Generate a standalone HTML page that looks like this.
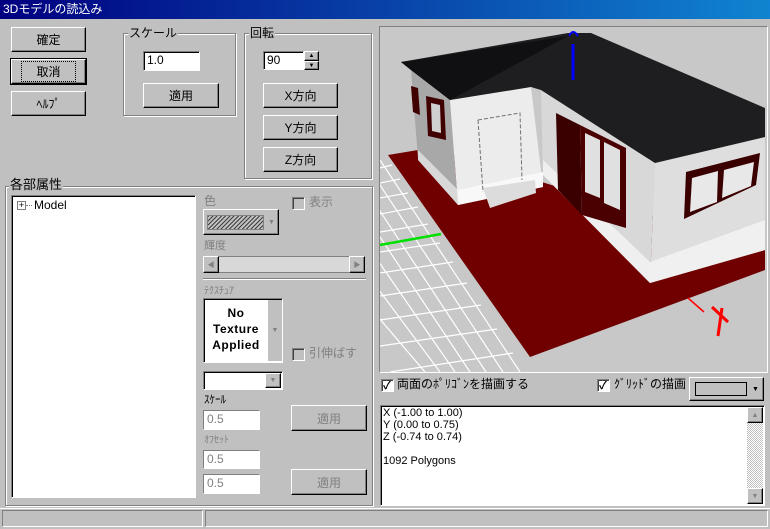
<!DOCTYPE html>
<html><head><meta charset="utf-8"><style>
*{box-sizing:border-box;margin:0;padding:0}
body{width:770px;height:529px;background:#c0c0c0;font-family:"Liberation Sans","Noto Sans CJK JP",sans-serif;font-size:12px;color:#000;position:relative;overflow:hidden}
.a{position:absolute}
.btn{position:absolute;background:#c0c0c0;border:1px solid;border-color:#fff #000 #000 #fff;box-shadow:inset -1px -1px 0 #808080;display:flex;align-items:center;justify-content:center;font-size:12px}
.grp{position:absolute;border:1px solid #808080;box-shadow:1px 1px 0 #fff,inset 1px 1px 0 #fff}
.lg{position:absolute;background:#c0c0c0;padding:0 1px;font-size:12px;line-height:13px}
.ed{position:absolute;background:#fff;border:1px solid;border-color:#808080 #fff #fff #808080;box-shadow:inset 1px 1px 0 #000;font-size:12px;line-height:16px;padding-left:3px}
.dis{color:#808080}
.cb{position:absolute;width:13px;height:13px;background:#fff;border:1px solid;border-color:#808080 #fff #fff #808080;box-shadow:inset 1px 1px 0 #404040}
.sunk{position:absolute;border:1px solid;border-color:#808080 #fff #fff #808080;box-shadow:inset 1px 1px 0 #000}
</style></head><body>
<div class="a" style="left:0;top:0;width:770px;height:19px;background:linear-gradient(90deg,#000080,#1084d0);color:#fff;font-size:12px;line-height:19px;padding-left:3px">3Dモデルの読込み</div>

<div class="btn" style="left:11px;top:27px;width:75px;height:25px">確定</div>
<div class="btn" style="left:11px;top:59px;width:75px;height:25px;outline:1px solid #000"><span style="border:1px dotted #000;padding:1px 14px">取消</span></div>
<div class="btn" style="left:11px;top:91px;width:75px;height:25px">ﾍﾙﾌﾟ</div>

<div class="grp" style="left:123px;top:33px;width:113px;height:83px"></div>
<div class="lg" style="left:128px;top:27px">スケール</div>
<div class="ed" style="left:143px;top:51px;width:57px;height:20px">1.0</div>
<div class="btn" style="left:143px;top:83px;width:76px;height:25px">適用</div>

<div class="grp" style="left:244px;top:33px;width:128px;height:146px"></div>
<div class="lg" style="left:249px;top:27px">回転</div>
<div class="ed" style="left:263px;top:51px;width:41px;height:19px">90</div>
<div class="btn" style="left:304px;top:51px;width:15px;height:10px;font-size:6px">▲</div>
<div class="btn" style="left:304px;top:61px;width:15px;height:9px;font-size:6px">▼</div>
<div class="btn" style="left:263px;top:83px;width:75px;height:25px">X方向</div>
<div class="btn" style="left:263px;top:115px;width:75px;height:25px">Y方向</div>
<div class="btn" style="left:263px;top:147px;width:75px;height:25px">Z方向</div>

<div class="grp" style="left:5px;top:186px;width:368px;height:320px"></div>
<div class="lg" style="left:9px;top:178px;font-size:13px">各部属性</div>
<div class="ed" style="left:11px;top:195px;width:185px;height:303px;padding:0">
<div class="a" style="left:5px;top:5px;width:9px;height:9px;border:1px solid #808080;font-size:9px;line-height:7px;text-align:center">+</div>
<div class="a" style="left:14px;top:9px;width:6px;border-top:1px dotted #808080"></div>
<div class="a" style="left:22px;top:2px;line-height:14px">Model</div>
</div>

<div class="lg dis" style="left:203px;top:195px">色</div>
<div class="btn" style="left:203px;top:209px;width:76px;height:26px;justify-content:flex-start;padding-left:3px">
<div style="width:57px;height:15px;border:1px solid #808080;background:repeating-linear-gradient(135deg,#404040 0 1px,#c0c0c0 1px 3px)"></div><span style="color:#808080;font-size:7px;margin-left:4px">▼</span></div>
<div class="cb" style="left:292px;top:197px;background:#c0c0c0"></div>
<div class="lg dis" style="left:308px;top:196px">表示</div>
<div class="lg dis" style="left:203px;top:240px;font-size:11px">輝度</div>
<div class="a" style="left:203px;top:256px;width:162px;height:17px;background:#d8d8d8;border:1px solid #808080"></div>
<div class="btn" style="left:203px;top:256px;width:16px;height:17px;font-size:7px;color:#808080">◀</div>
<div class="btn" style="left:349px;top:256px;width:16px;height:17px;font-size:7px;color:#808080">▶</div>
<div class="a" style="left:203px;top:278px;width:163px;height:2px;border-top:1px solid #808080;border-bottom:1px solid #fff"></div>
<div class="lg dis" style="left:203px;top:285px;font-size:10px">ﾃｸｽﾁｭｱ</div>
<div class="ed" style="left:203px;top:298px;width:80px;height:65px;padding:0">
<div class="a" style="left:3px;top:6px;width:58px;text-align:center;font-weight:bold;font-size:12px;line-height:16px;letter-spacing:.5px">No<br>Texture<br>Applied</div>
<div class="a" style="left:63px;top:1px;width:15px;height:61px;background:#c0c0c0;border-left:1px solid #fff;color:#808080;font-size:7px;text-align:center;line-height:61px">▼</div>
</div>
<div class="cb" style="left:292px;top:348px;background:#c0c0c0"></div>
<div class="lg dis" style="left:308px;top:347px">引伸ばす</div>
<div class="ed" style="left:203px;top:371px;width:80px;height:19px"></div>
<div class="btn" style="left:265px;top:373px;width:16px;height:15px;font-size:7px;color:#808080">▼</div>
<div class="lg" style="left:203px;top:394px;font-size:11px">ｽｹｰﾙ</div>
<div class="ed dis" style="left:203px;top:410px;width:57px;height:20px;box-shadow:none;border-color:#808080 #fff #fff #808080">0.5</div>
<div class="btn dis" style="left:291px;top:405px;width:76px;height:26px">適用</div>
<div class="lg dis" style="left:203px;top:434px;font-size:10px">ｵﾌｾｯﾄ</div>
<div class="ed dis" style="left:203px;top:450px;width:57px;height:19px;box-shadow:none">0.5</div>
<div class="ed dis" style="left:203px;top:474px;width:57px;height:20px;box-shadow:none">0.5</div>
<div class="btn dis" style="left:291px;top:469px;width:76px;height:26px">適用</div>

<div class="sunk" style="left:379px;top:26px;width:389px;height:347px;background:#c8c8c8;overflow:hidden">
<svg width="387" height="345" viewBox="380 27 387 345" style="position:absolute;left:0;top:0">
<rect x="380" y="27" width="390" height="350" fill="#c8c8c8"/>
<g stroke="#fff" stroke-width="1.2" fill="none">
<path d="M380 160 L520 372 M378 182 L503 372 M376 205 L486 372 M374 228 L470 372 M372 252 L455 372 M370 278 L440 372 M368 305 L425 372"/>
<path d="M380 168 L392 165 M380 183 L400 179 M380 198 L408 193 M380 214 L418 207 M380 232 L428 224 M380 252 L440 243 M380 273 L453 262 M380 296 L467 283 M380 320 L481 305 M380 346 L497 329 M390 372 L513 353"/>
</g>
<polygon points="388,155 430,148 765,250 765,270 530,357" fill="#700000"/>
<path d="M380 245 L441 234" stroke="#00e000" stroke-width="2.5"/>
<path d="M688 298 L704 312" stroke="#f00" stroke-width="1.5"/>
<path d="M712 307 L728 322 M722 308 L718 336" stroke="#f00" stroke-width="3"/>
<polygon points="411,70 450,100 458,205 418,158" fill="#a8a8a8"/>
<polygon points="418,150 458,190 458,205 418,160" fill="#d8d8d8"/>
<polygon points="450,100 531,87 543,187 458,205" fill="#ececec"/>
<polygon points="458,190 543,172 543,187 458,205" fill="#f8f8f8"/>
<polygon point="0,0" points="483,188 535,180 536,193 490,208" fill="#dcdcdc"/>
<path d="M478 120 L520 113 L522 180 M478 120 L483 192" stroke="#707070" stroke-dasharray="4 2" fill="none"/>
<polygon points="411,86 418,88 420,115 413,112" fill="#400000"/>
<polygon points="426,96 444,100 446,140 428,136" fill="#400000"/>
<polygon points="431,103 440,105 441,133 432,131" fill="#d0d0d0"/>
<polygon points="541,90 655,163 650,283 543,175" fill="#d8d8d8"/>
<polygon points="543,160 650,262 650,283 543,175" fill="#efefef"/>
<polygon points="556,113 580,125 582,215 558,190" fill="#3a0000"/>
<polygon points="580,125 626,148 626,228 582,215" fill="#4a0000"/>
<polygon points="585,133 600,140 600,198 585,192" fill="#e0e0e0"/>
<polygon points="604,142 620,150 620,210 604,203" fill="#e0e0e0"/>
<polygon points="655,163 765,137 765,250 650,283" fill="#dedede"/>
<polygon points="650,262 765,220 765,250 650,283" fill="#f0f0f0"/>
<polygon points="686,172 760,153 756,185 684,219" fill="#3a0000"/>
<polygon points="692,178 718,171 717,202 690,212" fill="#e8e8e8"/>
<polygon points="724,170 754,162 751,186 722,198" fill="#e8e8e8"/>
<polygon points="401,62 568,33 591,33 765,108 765,137 655,163 541,90 531,87 450,100 411,70" fill="#1e1e20"/>
<polygon points="401,62 568,36 450,100 411,70" fill="#101012"/>
<path d="M573 44 L573 80" stroke="#0000ff" stroke-width="3"/>
<path d="M569 36 Q573 28 578 36" stroke="#0000ff" stroke-width="2" fill="none"/>
</svg></div>

<div class="cb" style="left:381px;top:379px"><span style="position:absolute;left:1px;top:-3px;font-size:11px;font-weight:bold">✓</span></div>
<div class="lg" style="left:396px;top:378px">両面のﾎﾟﾘｺﾞﾝを描画する</div>
<div class="cb" style="left:597px;top:379px"><span style="position:absolute;left:1px;top:-3px;font-size:11px;font-weight:bold">✓</span></div>
<div class="lg" style="left:613px;top:378px">ｸﾞﾘｯﾄﾞの描画</div>
<div class="btn" style="left:689px;top:377px;width:75px;height:24px;justify-content:flex-start;padding-left:5px">
<div style="width:52px;height:14px;border:1px solid #000"></div><span style="font-size:7px;margin-left:5px">▼</span></div>

<div class="ed" style="left:380px;top:405px;width:385px;height:101px;font-size:11px;line-height:12px;padding:1px 2px">X (-1.00 to 1.00)<br>Y (0.00 to 0.75)<br>Z (-0.74 to 0.74)<br><br>1092 Polygons</div>
<div class="a" style="left:747px;top:407px;width:16px;height:97px;background:repeating-conic-gradient(#fff 0 25%,#c0c0c0 0 50%) 0 0/2px 2px"></div>
<div class="btn" style="left:747px;top:407px;width:16px;height:16px;font-size:7px;color:#808080">▲</div>
<div class="btn" style="left:747px;top:488px;width:16px;height:16px;font-size:7px;color:#808080">▼</div>

<div class="a" style="left:0;top:508px;width:770px;height:1px;background:#fff"></div>
<div class="a" style="left:2px;top:510px;width:201px;height:17px;border:1px solid;border-color:#808080 #fff #fff #808080"></div>
<div class="a" style="left:205px;top:510px;width:563px;height:17px;border:1px solid;border-color:#808080 #fff #fff #808080"></div>
</body></html>
